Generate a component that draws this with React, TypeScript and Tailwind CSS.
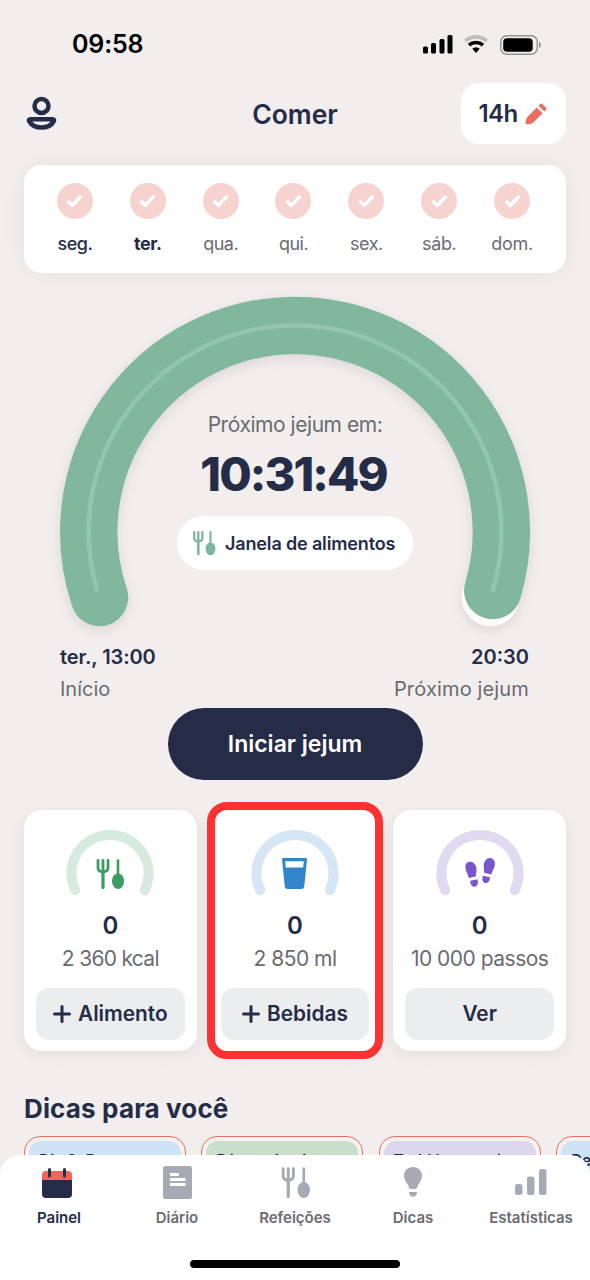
import type { ReactNode } from "react";

const days = [
  { label: "seg.", cls: "font-medium text-[#252c48] tracking-[-0.5px]" },
  { label: "ter.", cls: "font-bold text-[#252c48] tracking-[-0.4px]" },
  { label: "qua.", cls: "text-[#6b6b70] tracking-[-0.5px]" },
  { label: "qui.", cls: "text-[#6b6b70] tracking-[-0.5px]" },
  { label: "sex.", cls: "text-[#6b6b70] tracking-[-0.5px]" },
  { label: "sáb.", cls: "text-[#6b6b70] tracking-[-0.4px]" },
  { label: "dom.", cls: "text-[#6b6b70] tracking-[-0.3px]" },
];

const tips = [
  { title: "Dia 2: Bem", bg: "bg-[#cfe3f6]" },
  { title: "Récem-institut", bg: "bg-[#cadfcb]" },
  { title: "Tudd bem, quí", bg: "bg-[#dcd7ec]" },
  { title: "De", bg: "bg-[#cfe3f6]" },
];

function Cutlery({ className }: { className: string }) {
  return (
    <svg viewBox="0 0 28 32" className={className} fill="none" stroke="currentColor" strokeLinecap="round">
      <path d="M2 2.5V10Q2 13.5 7 14Q12 13.5 12 10V2.5M7 2.5V14" strokeWidth="2.8" strokeLinejoin="round" />
      <path d="M7 13V29.5" strokeWidth="3.2" />
      <path d="M22 2.5V18" strokeWidth="2.6" />
      <path d="M22 15.5C25.6 15.5 28 19.2 28 23C28 27.6 25 31 22 31C19 31 16 27.6 16 23C16 19.2 18.4 15.5 22 15.5Z" fill="currentColor" stroke="none" />
    </svg>
  );
}

function Glass() {
  return (
    <svg viewBox="0 0 25 31" className="h-[31px] w-[25px]">
      <path
        d="M0 1.2Q0 0 1.2 0H23.8Q25 0 25 1.2L22.3 28Q22 31 19 31H6Q3 31 2.7 28ZM3.2 3.2L3.8 9.4H21.2L21.8 3.2Z"
        fill="#3085cb"
        fillRule="evenodd"
      />
    </svg>
  );
}

function Steps() {
  return (
    <svg viewBox="0 0 30 29" className="h-[29px] w-[30px]" fill="#7856d0">
      <path d="M.3 9C.2 5.600 2.500 3.700 5.300 3.700C8.800 3.700 11.300 7 11.500 11.200C11.600 14 10.600 16.100 11.200 18.200L3.700 20C3.200 16 .5 13.500 .3 9Z" />
      <path d="M5.400 22.700L12.300 21.200C13.900 24.200 12.400 28.700 9.300 28.700C6.700 28.700 5 26 5.400 22.700Z" />
      <path d="M24.800 0C27.700 0 30 2.400 29.900 6C29.700 10.500 26.900 12.600 26.600 16.500L19 14.800C19.600 12.800 18.500 10.500 18.700 7.500C19 3.300 21.500 0 24.800 0Z" />
      <path d="M18 17.800L24.900 19.300C25 22.600 23.300 25.100 20.800 25.100C17.800 25.100 16.400 21.500 18 17.800Z" />
    </svg>
  );
}

function Gauge({ color, children }: { color: string; children: ReactNode }) {
  return (
    <div className="relative flex h-[66px] w-[88px] justify-center pt-[28px]">
      <svg viewBox="0 0 88 66" className="absolute inset-0 h-[66px] w-[88px]" fill="none">
        <path d="M9.200 60.200A38.600 38.600 0 1 1 78.800 60.200" stroke={color} strokeWidth="10" strokeLinecap="round" />
      </svg>
      {children}
    </div>
  );
}

type StatCardProps = {
  color: string;
  icon: ReactNode;
  goal: string;
  goalClass: string;
  action: string;
  plus?: boolean;
  highlighted?: boolean;
};

function StatCard({ color, icon, goal, goalClass, action, plus, highlighted }: StatCardProps) {
  return (
    <div className="relative flex h-[241px] min-w-0 flex-col items-center rounded-[18px] bg-white px-3 pt-5 shadow-[0_4px_16px_rgba(60,40,40,0.07)]">
      <Gauge color={color}>{icon}</Gauge>
      <div className="mt-[14px] text-[24px] leading-[32px] font-semibold text-[#252c48]">0</div>
      <div className={`text-[21px] leading-[34px] whitespace-nowrap text-[#6b6b70] ${goalClass}`}>{goal}</div>
      <button className="mt-3 flex h-[52px] w-full items-center justify-center gap-[7px] rounded-[13px] bg-[#ecedef] text-[20.8px] font-semibold whitespace-nowrap text-[#252c48]">
        {plus && (
          <svg viewBox="0 0 18 18" className="size-[18px]" stroke="currentColor" strokeWidth="3" strokeLinecap="round">
            <path d="M9 1.500V16.500M1.500 9H16.500" />
          </svg>
        )}
        {action}
      </button>
      {highlighted && <div className="absolute -inset-x-[2px] -top-2 -bottom-2 rounded-[20px] border-8 border-[#ff3131]" />}
    </div>
  );
}

function Tab({ label, active, children }: { label: string; active?: boolean; children: ReactNode }) {
  return (
    <div className="flex w-[118px] flex-col items-center">
      <div className="flex h-[34px] items-center justify-center text-[#a7a9b5]">{children}</div>
      <span className={`mt-[9px] text-[15px] leading-[20px] font-semibold whitespace-nowrap ${active ? "text-[#252c48]" : "text-[#6b6b70]"}`}>
        {label}
      </span>
    </div>
  );
}

function StatusBar() {
  return (
    <div className="flex h-[82px] items-center justify-between pt-[7px] pr-[49px] pl-[72px]">
      <span className="text-[25px] font-semibold tracking-[-0.15px] text-black">09:58</span>
      <div className="flex items-center gap-[11px]">
        <svg viewBox="0 0 30 19" className="h-[19px] w-[30px]">
          <rect x="0" y="11.500" width="5" height="7" rx="1.500" />
          <rect x="8" y="8" width="5" height="10.500" rx="1.500" />
          <rect x="16.500" y="4" width="5" height="14.500" rx="1.500" />
          <rect x="24.500" y="0" width="5" height="18.500" rx="1.500" />
        </svg>
        <svg viewBox="0 0 24 19" className="h-[19px] w-[24px]" fill="none" strokeWidth="3.600">
          <path d="M1.300 6A16 16 0 0 1 22.700 6" stroke="#bfbcbc" />
          <path d="M5 10.200A10.500 10.500 0 0 1 19 10.200" stroke="#000" />
          <path d="M8.300 13.800A5.600 5.600 0 0 1 15.700 13.800L12 18Z" fill="#000" />
        </svg>
        <svg viewBox="0 0 42 20" className="mr-[-1px] ml-px h-[20px] w-[42px]">
          <rect x=".75" y=".75" width="36.500" height="18.500" rx="6" fill="none" stroke="#949191" strokeWidth="1.400" />
          <rect x="3.200" y="3.200" width="29.500" height="13.600" rx="3.800" />
          <path d="M39 6.800Q41 8 41 10T39 13.200Z" fill="#949191" />
        </svg>
      </div>
    </div>
  );
}

export default function App() {
  return (
    <div className="flex h-[1280px] w-[590px] flex-col overflow-hidden bg-[#f2eeee] font-[Inter,sans-serif] text-[#252c48]">
      <StatusBar />

      <header className="grid h-[62px] grid-cols-[1fr_auto_1fr] items-center px-6">
        <svg viewBox="0 0 34 36" className="h-[36px] w-[34px]" fill="none" stroke="#252c48" strokeWidth="4.500">
          <circle cx="17.500" cy="11" r="7" />
          <path d="M6.200 24.200H28.800C30.400 24.200 30.400 25.500 29.600 26.500C27 31 22.700 32.500 17.500 32.500C12.200 32.500 8 31 5.400 26.500C4.600 25.500 4.600 24.200 6.200 24.200Z" />
        </svg>
        <h1 className="pt-[3px] text-[26.5px] font-semibold">Comer</h1>
        <button className="flex h-[61px] w-[105px] items-center justify-center gap-[7px] justify-self-end rounded-[18px] bg-white pt-px pr-[2px] text-[24px] font-semibold tracking-[-0.6px]">
          14h
          <svg viewBox="0 0 24 24" className="size-[22px]" fill="#e76e61">
            <path d="M12.800 4.800L19.200 11.200L9 21.200Q6.500 23.500 1.500 23.300Q.5 23.200 .6 22.200Q.6 17.500 2.800 15Z" />
            <path d="M14.800 2.900L16.700 1Q17.800 0 18.900 1L23 5.100Q24 6.200 23 7.300L21.100 9.200Z" />
          </svg>
        </button>
      </header>

      <section className="mx-6 mt-[21px] grid h-[107.500px] grid-cols-7 rounded-[18px] bg-white pt-[18px] pr-[17.500px] pl-[14.500px] shadow-[0_0_28px_rgba(60,40,40,0.05)]">
        {days.map((d) => (
          <div key={d.label} className="flex flex-col items-center">
            <div className="flex size-9 items-center justify-center rounded-full bg-[#f7d3cf]">
              <svg viewBox="0 0 18 15" className="h-[14px] w-[17px]" fill="none" stroke="#fff" strokeWidth="3.800">
                <path d="M1.500 7.500L6.800 12.200L16.300 2" strokeLinejoin="round" />
              </svg>
            </div>
            <span className={`mt-[13px] text-[18px] leading-[24px] ${d.cls}`}>{d.label}</span>
          </div>
        ))}
      </section>

      <section className="relative mx-[40px] mt-[3.500px] h-[368px]">
        <svg viewBox="40 276 510 368" className="absolute inset-0 h-full w-full" fill="none">
          <g className="[filter:drop-shadow(0_4px_6px_rgba(80,50,50,0.12))]">
            <path d="M99.500 597.500A206.300 206.300 0 1 1 490.500 597.500" stroke="#fcfbfa" strokeWidth="57.500" strokeLinecap="round" />
            <path d="M99.500 597.500A206.300 206.300 0 1 1 492.800 590.500" stroke="#81b79d" strokeWidth="57.500" strokeLinecap="round" />
          </g>
          <path d="M97.500 591.500A206.300 206.300 0 1 1 492.500 591.500" stroke="#94c6ae" strokeWidth="4.500" />
        </svg>
        <div className="relative flex flex-col items-center pt-[135px]">
          <p className="text-[21px] leading-[28px] tracking-[-0.45px] text-[#6b6b70]">Próximo jejum em:</p>
          <p className="mt-[8px] pr-[3px] text-[47px] leading-[54px] font-extrabold tracking-[-1.9px]">10:31:49</p>
          <div className="mt-[15px] flex h-[54px] w-[236px] items-center gap-[9px] rounded-full bg-white pl-[15px] text-[18px] font-semibold tracking-[-0.15px] whitespace-nowrap">
            <Cutlery className="h-[26px] w-[24px] text-[#7fb59b]" />
            Janela de alimentos
          </div>
        </div>
      </section>

      <div className="mx-[60px] mt-[-4px] flex h-[68px] justify-between pt-[0.5px] text-[20px] leading-[32px] whitespace-nowrap">
        <div>
          <p className="font-semibold tracking-[-0.1px]">ter., 13:00</p>
          <p className="text-[#6b6b70]">Início</p>
        </div>
        <div className="pr-px text-right">
          <p className="font-semibold">20:30</p>
          <p className="tracking-[0.15px] text-[#6b6b70]">Próximo jejum</p>
        </div>
      </div>

      <button className="h-[72px] w-[255px] shrink-0 self-center rounded-full bg-[#252c48] text-[23px] font-semibold text-white">
        Iniciar jejum
      </button>

      <section className="mx-6 mt-[30px] grid shrink-0 grid-cols-3 gap-3">
        <StatCard
          color="#d6eadf"
          icon={<Cutlery className="h-[32px] w-[28px] text-[#3a9e60]" />}
          goal="2 360 kcal"
          goalClass="tracking-[-0.7px]"
          action="Alimento"
          plus
        />
        <StatCard color="#d5e6f4" icon={<Glass />} goal="2 850 ml" goalClass="tracking-[-0.5px]" action="Bebidas" plus highlighted />
        <StatCard color="#dfdaf0" icon={<Steps />} goal="10 000 passos" goalClass="tracking-[-0.5px]" action="Ver" />
      </section>

      <section className="min-h-0 flex-1 pt-[40px] pl-6">
        <h2 className="text-[26px] leading-[36px] font-bold tracking-[0.15px]">Dicas para você</h2>
        <div className="mt-[9px] flex gap-[15.300px]">
          {tips.map((t) => (
            <div key={t.title} className="h-[120px] w-[162px] shrink-0 rounded-[16px] border-[1.500px] border-[#e76e61] bg-[#f7f1f0] p-1">
              <div className={`h-full rounded-[12px] px-[10px] pt-[8px] text-[15.500px] font-semibold whitespace-nowrap ${t.bg}`}>{t.title}</div>
            </div>
          ))}
        </div>
      </section>

      <nav className="relative h-[125px] shrink-0 rounded-t-[20px] bg-white pt-[10px]">
        <div className="flex">
          <Tab label="Painel" active>
            <svg viewBox="0 0 30 30" className="mt-[2px] mr-[4px] h-[30px] w-[30px]">
              <path d="M0 12H30V26Q30 30 26 30H4Q0 30 0 26Z" fill="#252c48" />
              <path d="M0 12V7Q0 3 4 3H26Q30 3 30 7V12Z" fill="#f06557" />
              <path d="M7.500 1.500V8M22.500 1.500V8" stroke="#252c48" strokeWidth="3" strokeLinecap="round" />
            </svg>
          </Tab>
          <Tab label="Diário">
            <svg viewBox="0 0 29 33" className="h-[33px] w-[29px]">
              <rect width="29" height="33" rx="2.500" fill="currentColor" />
              <path d="M7 8.500H16M7 13.500H22.500M7 18.500H22.500" stroke="#fff" strokeWidth="2.800" />
            </svg>
          </Tab>
          <Tab label="Refeições">
            <Cutlery className="h-[33px] w-[29px]" />
          </Tab>
          <Tab label="Dicas">
            <svg viewBox="0 0 18 30" className="h-[30px] w-[18px]" fill="currentColor">
              <path d="M9 0C14 0 18 3.900 18 9C18 12.700 15.800 14.800 14 18C13 20 13 22 11.500 22H6.500C5 22 5 20 4 18C2.200 14.800 0 12.700 0 9C0 3.900 4 0 9 0Z" />
              <path d="M5 25H13C13 28 11.300 29.700 9 29.700S5 28 5 25Z" />
            </svg>
          </Tab>
          <Tab label="Estatísticas">
            <svg viewBox="0 0 32 26" className="h-[26px] w-[32px]" fill="currentColor">
              <rect x="0" y="15" width="7.500" height="11" rx="2.500" />
              <rect x="12" y="7.500" width="7.500" height="18.500" rx="2.500" />
              <rect x="24" y="0" width="7.500" height="26" rx="2.500" />
            </svg>
          </Tab>
        </div>
        <div className="mx-auto mt-[32px] h-2 w-[210px] rounded-full bg-black" />
      </nav>
    </div>
  );
}
